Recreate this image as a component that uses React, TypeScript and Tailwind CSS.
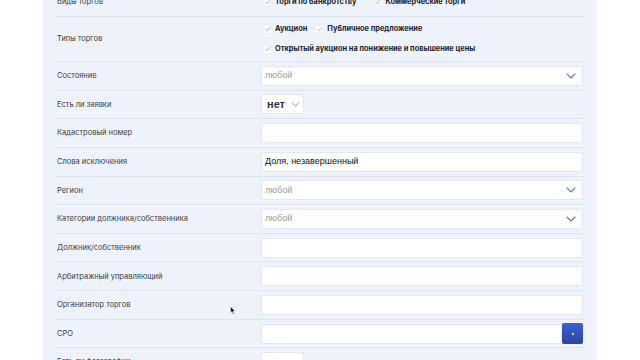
import React from "react";

const Chevron = ({ w = 10, h = 6, color = "#6a78ae" }: { w?: number; h?: number; color?: string }) => (
  <svg width={w} height={h} viewBox="0 0 10 6" fill="none">
    <path d="M1 1l4 4 4-4" stroke={color} strokeWidth="1.1" strokeLinecap="round" strokeLinejoin="round" />
  </svg>
);

const Box = () => (
  <span className="w-[9px] h-[9px] bg-white rounded-[1px] border border-[#eef0f4] flex items-center justify-center shrink-0">
    <svg width="6" height="6" viewBox="0 0 6 6">
      <path d="M0.8 3.4L2.1 4.9L5.2 1" stroke="#a0a4ad" strokeWidth="0.8" fill="none" strokeLinecap="round" />
    </svg>
  </span>
);

const Item = ({ text }: { text: string }) => (
  <div className="flex items-center gap-[3px]">
    <Box />
    <span className="text-[7.4px] font-bold text-[#23252b] leading-none">{text}</span>
  </div>
);

function Row({ label, children, tall }: { label: string; children?: React.ReactNode; tall?: string }) {
  return (
    <div className={"flex items-center border-b border-[#e0e4ef] " + (tall ? tall : "h-[28.65px]")}>
      <div className="w-[205px] pl-px text-[7.5px] text-[#3c3e46] leading-none">{label}</div>
      <div className="flex-1">{children}</div>
    </div>
  );
}

const Input = ({ children }: { children?: React.ReactNode }) => (
  <div
    className="w-[322px] h-[20px] bg-white border border-[#e3e7f1] rounded-[2px] flex items-center pl-[3px] text-[9px] text-[#111]"
    style={{ fontFamily: '"Liberation Sans", Arial, sans-serif' }}
  >
    {children}
  </div>
);

const Select = () => (
  <div
    className="w-[322px] h-[20px] bg-white border border-[#e3e7f1] rounded-[2px] flex items-center justify-between pl-[3px] pr-[6px] text-[9px] text-[#9a9a9a]"
    style={{ fontFamily: '"Liberation Sans", Arial, sans-serif' }}
  >
    <span>любой</span>
    <Chevron />
  </div>
);

const SmallSelect = () => (
  <div
    className="w-[43px] h-[20px] bg-white border border-[#e3e7f1] rounded-[2px] flex items-center pl-[5px] gap-[6px]"
    style={{ fontFamily: '"Liberation Sans", Arial, sans-serif' }}
  >
    <span className="text-[11px] font-bold text-[#333] leading-none">нет</span>
    <Chevron w={9} h={5} color="#7d88b5" />
  </div>
);

export default function App() {
  return (
    <div className="w-[640px] h-[360px] bg-white overflow-hidden relative" style={{ fontFamily: "Inter, sans-serif" }}>
      <div className="ml-[43px] w-[554px] bg-[#eef2fb] px-[13px] mt-[-13px] pb-[40px]">
        <Row label="Виды торгов" tall="h-[30px]">
          <div className="flex items-center gap-[17px] pl-[2px]">
            <Item text="Торги по банкротству" />
            <Item text="Коммерческие торги" />
          </div>
        </Row>
        <Row label="Типы торгов" tall="h-[45px]">
          <div className="flex flex-col gap-[8px] pl-[2px]">
            <div className="flex items-center gap-[8px] h-[12px]">
              <Item text="Аукцион" />
              <Item text="Публичное предложение" />
            </div>
            <div className="flex items-center h-[12px]">
              <Item text="Открытый аукцион на понижение и повышение цены" />
            </div>
          </div>
        </Row>
        <Row label="Состояние">
          <Select />
        </Row>
        <Row label="Есть ли заявки">
          <SmallSelect />
        </Row>
        <Row label="Кадастровый номер">
          <Input />
        </Row>
        <Row label="Слова исключения">
          <Input>Доля, незавершенный</Input>
        </Row>
        <Row label="Регион">
          <Select />
        </Row>
        <Row label="Категории должника/собственника">
          <Select />
        </Row>
        <Row label="Должник/собственник">
          <Input />
        </Row>
        <Row label="Арбитражный управляющий">
          <Input />
        </Row>
        <Row label="Организатор торгов">
          <Input />
        </Row>
        <Row label="СРО">
          <div className="flex w-[322px] h-[21px]">
            <div className="flex-1 h-[20px] mt-[0.5px] bg-white border border-[#e3e7f1] rounded-l-[2px]" />
            <div className="w-[21px] h-[21px] rounded-[2px] bg-gradient-to-b from-[#3d60d3] to-[#2a44a4] flex items-center justify-center">
              <span className="w-[2px] h-[2px] rounded-full bg-white" />
            </div>
          </div>
        </Row>
        <Row label="Есть ли фотографии">
          <SmallSelect />
        </Row>
      </div>
      <svg className="absolute left-[230px] top-[306px]" width="6" height="9" viewBox="0 0 6 9">
        <path d="M0.5 0.5L0.5 7L2 5.6L3.2 8.3L4.2 7.9L3 5.3L5 5.2Z" fill="#111" stroke="#fff" strokeWidth="0.5" />
      </svg>
    </div>
  );
}
